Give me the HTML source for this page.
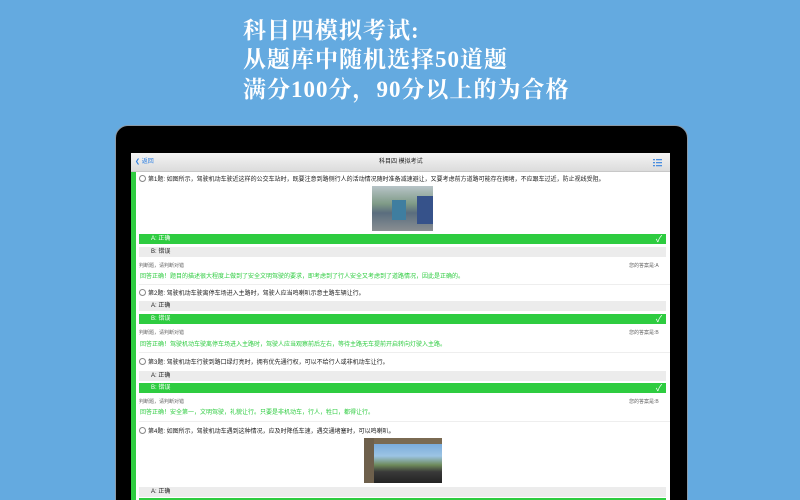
<!DOCTYPE html>
<html><head><meta charset="utf-8"><style>
*{margin:0;padding:0;box-sizing:border-box}
html,body{width:800px;height:500px;overflow:hidden}
body{background:#64aae0;position:relative;font-family:"Liberation Sans","Noto Sans CJK SC",sans-serif}
.h{position:absolute;left:243px;color:#fff;font-family:"Liberation Serif","Noto Serif CJK SC",serif;font-size:23px;font-weight:bold;line-height:30px;letter-spacing:1px;white-space:nowrap}
.dev{position:absolute;left:115px;top:125px;width:573px;height:390px;background:#000;border-radius:13px;border:1px solid #8a9aa8}
.scr{position:absolute;left:131px;top:153px;width:539px;height:347px;background:#fff;overflow:hidden}
.nav{position:absolute;left:0;top:0;width:539px;height:19px;background:linear-gradient(#f4f4f4,#dcdcdc);border-bottom:1px solid #c8c8c8}
.stripe{position:absolute;left:0;top:19px;width:5px;height:330px;background:#2ecc40}
.t{position:absolute;font-size:6px;white-space:nowrap;color:#222;line-height:8px}
.row{position:absolute;left:8px;width:527px;height:10px;background:#ececec;font-size:6px;line-height:10px;padding-left:12px;color:#222}
.g{background:#2ecc40;color:#fff}
.small{color:#666;font-size:5px}
.ok{color:#2ecc40}
.sep{position:absolute;left:8px;width:531px;height:1px;background:#eee}
.ht{display:inline-block;width:7px;height:7px;border:1px solid #888;border-radius:50%;vertical-align:-1px;margin-right:2px}
</style></head><body>
<div class="h" style="top:16px">科目四模拟考试:</div>
<div class="h" style="top:45px">从题库中随机选择50道题</div>
<div class="h" style="top:75px">满分100分，90分以上的为合格</div>
<div class="dev"></div>
<div class="scr">
<div class="nav">
<div class="t" style="left:4px;top:5px;color:#2a7de1;font-size:6px">❮ 返回</div>
<div class="t" style="left:248px;top:5px;font-size:6px">科目四 模拟考试</div>
<svg style="position:absolute;left:522px;top:5px" width="9" height="9"><g fill="#4a8ee0"><rect x="0" y="1" width="2" height="1.3"/><rect x="3" y="1" width="6" height="1.3"/><rect x="0" y="4" width="2" height="1.3"/><rect x="3" y="4" width="6" height="1.3"/><rect x="0" y="7" width="2" height="1.3"/><rect x="3" y="7" width="6" height="1.3"/></g></svg>
</div>
<div class="stripe"></div>

<div class="t" style="left:8px;top:22px"><span class="ht"></span>第1题: 如图所示，驾驶机动车驶近这样的公交车站时，既要注意到路侧行人的活动情况随时准备减速避让，又要考虑前方道路可能存在拥堵，不应跟车过近，防止视线受阻。</div>
<div style="position:absolute;left:241px;top:33px;width:61px;height:45px;background:linear-gradient(#b8c4c8 0%,#7e9a86 40%,#5a6d7e 60%,#8a8f92 100%)"><div style="position:absolute;left:20px;top:14px;width:14px;height:20px;background:#3f7ea0"></div><div style="position:absolute;right:0;top:10px;width:16px;height:28px;background:#36528a"></div></div>
<div class="row g" style="top:81px">A: 正确<span style="position:absolute;right:4px;top:0;font-size:9px">✓</span></div>
<div class="row" style="top:94px">B: 错误</div>
<div class="t small" style="left:8px;top:109px">判断题，请判断对错</div>
<div class="t small" style="left:498px;top:109px">您的答案是:A</div>
<div class="t ok" style="left:9px;top:120px">回答正确！题目的描述很大程度上做到了安全文明驾驶的要求，即考虑到了行人安全又考虑到了道路情况，因此是正确的。</div>
<div class="sep" style="top:131px"></div>

<div class="t" style="left:8px;top:136px"><span class="ht"></span>第2题: 驾驶机动车驶离停车场进入主路时，驾驶人应当鸣喇叭示意主路车辆让行。</div>
<div class="row" style="top:148px">A: 正确</div>
<div class="row g" style="top:161px">B: 错误<span style="position:absolute;right:4px;top:0;font-size:9px">✓</span></div>
<div class="t small" style="left:8px;top:176px">判断题，请判断对错</div>
<div class="t small" style="left:498px;top:176px">您的答案是:B</div>
<div class="t ok" style="left:9px;top:188px">回答正确！驾驶机动车驶离停车场进入主路时，驾驶人应当观察前后左右，等待主路无车提前开启转向灯驶入主路。</div>
<div class="sep" style="top:199px"></div>

<div class="t" style="left:8px;top:205px"><span class="ht"></span>第3题: 驾驶机动车行驶到路口绿灯亮时，拥有优先通行权，可以不给行人或非机动车让行。</div>
<div class="row" style="top:218px">A: 正确</div>
<div class="row g" style="top:230px">B: 错误<span style="position:absolute;right:4px;top:0;font-size:9px">✓</span></div>
<div class="t small" style="left:8px;top:245px">判断题，请判断对错</div>
<div class="t small" style="left:498px;top:245px">您的答案是:B</div>
<div class="t ok" style="left:9px;top:256px">回答正确！安全第一，文明驾驶，礼貌让行。只要是非机动车，行人，牲口，都得让行。</div>
<div class="sep" style="top:268px"></div>

<div class="t" style="left:8px;top:274px"><span class="ht"></span>第4题: 如图所示，驾驶机动车遇到这种情况，应及时降低车速，遇交通堵塞时，可以鸣喇叭。</div>
<div style="position:absolute;left:233px;top:285px;width:78px;height:45px;background:linear-gradient(#6aa0d8,#9cc4e4 40%,#6e8a5a 60%,#3a3a3a 75%,#222)"><div style="position:absolute;left:0;top:0;width:78px;height:6px;background:#7a6a52"></div><div style="position:absolute;left:0;top:0;width:10px;height:45px;background:#6e604c"></div></div>
<div class="row" style="top:334px">A: 正确</div>
<div class="row g" style="top:345px"></div>
</div>
</body></html>
